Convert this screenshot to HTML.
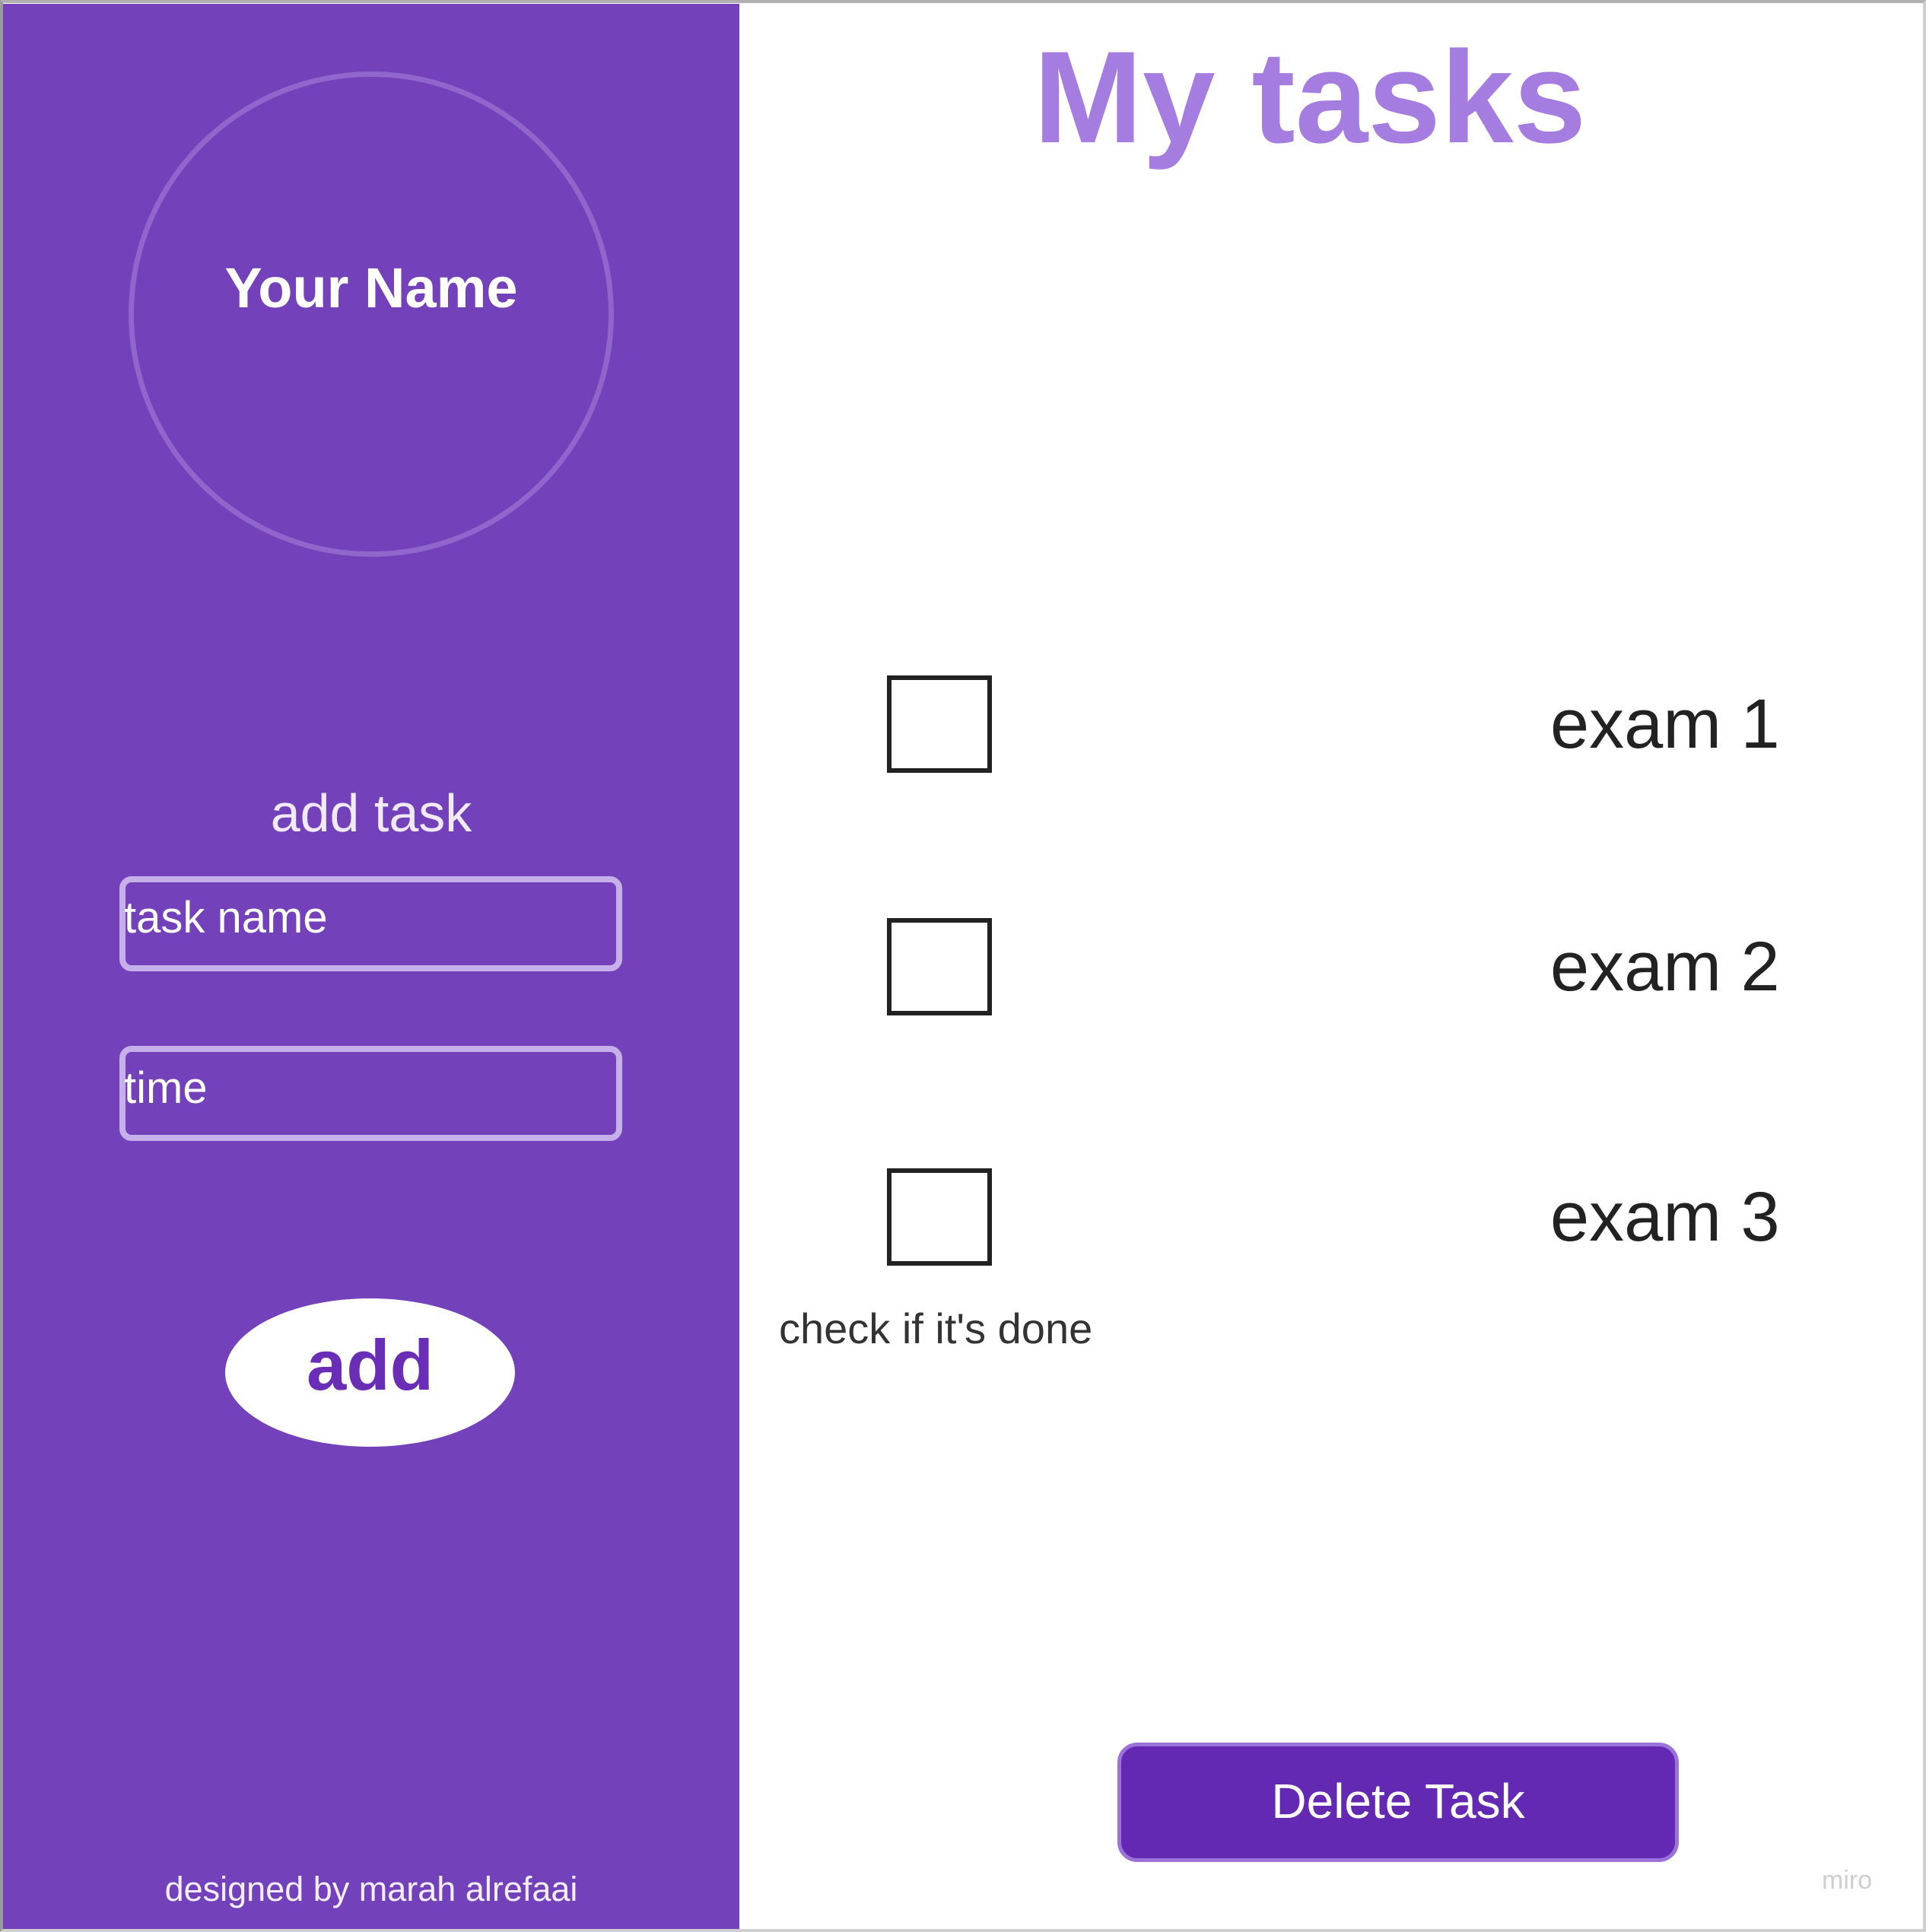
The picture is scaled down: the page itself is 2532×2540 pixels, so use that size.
<!DOCTYPE html>
<html><head><meta charset="utf-8"><style>
html,body{margin:0;padding:0}
body{width:2532px;height:2540px;position:relative;overflow:hidden;background:#fff;font-family:"Liberation Sans",sans-serif}
.abs{position:absolute}
.t{position:absolute;white-space:nowrap;line-height:1}
</style></head><body>
<div class="abs" style="left:0;top:0;width:2532px;height:2540px;box-sizing:border-box;border:4px solid #cfcfcf;border-left-color:#9a9a9a;border-top-color:#b0b0b0"></div>
<div class="abs" style="left:4px;top:5px;width:968px;height:2531px;background:#7341b9"></div>
<div class="abs" style="left:169px;top:94px;width:638px;height:638px;border-radius:50%;border:7px solid #9066cc;box-sizing:border-box"></div>
<div class="t" style="left:0;width:976px;text-align:center;top:342px;font-size:74px;font-weight:bold;color:#fff">Your Name</div>
<div class="t" style="left:0;width:976px;text-align:center;top:1034px;font-size:70px;color:#f0eaf8">add task</div>
<div class="abs" style="left:157px;top:1152px;width:661px;height:125px;border:8px solid #c5b0ea;border-radius:16px;box-sizing:border-box"></div>
<div class="t" style="left:163px;top:1178px;font-size:58px;color:#fff">task name</div>
<div class="abs" style="left:157px;top:1375px;width:661px;height:125px;border:8px solid #c5b0ea;border-radius:16px;box-sizing:border-box"></div>
<div class="t" style="left:163px;top:1402px;font-size:58px;color:#fff">time</div>
<div class="abs" style="left:296px;top:1707px;width:381px;height:195px;border-radius:50%;background:#fff"></div>
<div class="t" style="left:296px;width:381px;text-align:center;top:1748px;font-size:94px;font-weight:bold;color:#6a2db5">add</div>
<div class="t" style="left:0;width:976px;text-align:center;top:2461px;font-size:45px;color:#f3eefa">designed by marah alrefaai</div>
<div class="t" style="left:972px;width:1500px;text-align:center;top:42px;font-size:172px;font-weight:bold;color:#a57de0">My tasks</div>
<div class="abs" style="left:1166px;top:888px;width:138px;height:128px;border:6px solid #222;box-sizing:border-box"></div>
<div class="abs" style="left:1166px;top:1207px;width:138px;height:128px;border:6px solid #222;box-sizing:border-box"></div>
<div class="abs" style="left:1166px;top:1536px;width:138px;height:128px;border:6px solid #222;box-sizing:border-box"></div>
<div class="t" style="left:2038px;top:906px;font-size:92px;color:#222">exam 1</div>
<div class="t" style="left:2038px;top:1225px;font-size:92px;color:#222">exam 2</div>
<div class="t" style="left:2038px;top:1554px;font-size:92px;color:#222">exam 3</div>
<div class="t" style="left:1024px;top:1719px;font-size:56px;color:#333">check if it's done</div>
<div class="abs" style="left:1469px;top:2291px;width:738px;height:157px;background:#6429b2;border:5px solid #9a72d8;border-radius:26px;box-sizing:border-box"></div>
<div class="t" style="left:1469px;width:738px;text-align:center;top:2336px;font-size:64px;color:#fff">Delete Task</div>
<div class="t" style="left:2395px;top:2455px;font-size:34px;color:#cfcfcf">miro</div>
</body></html>
